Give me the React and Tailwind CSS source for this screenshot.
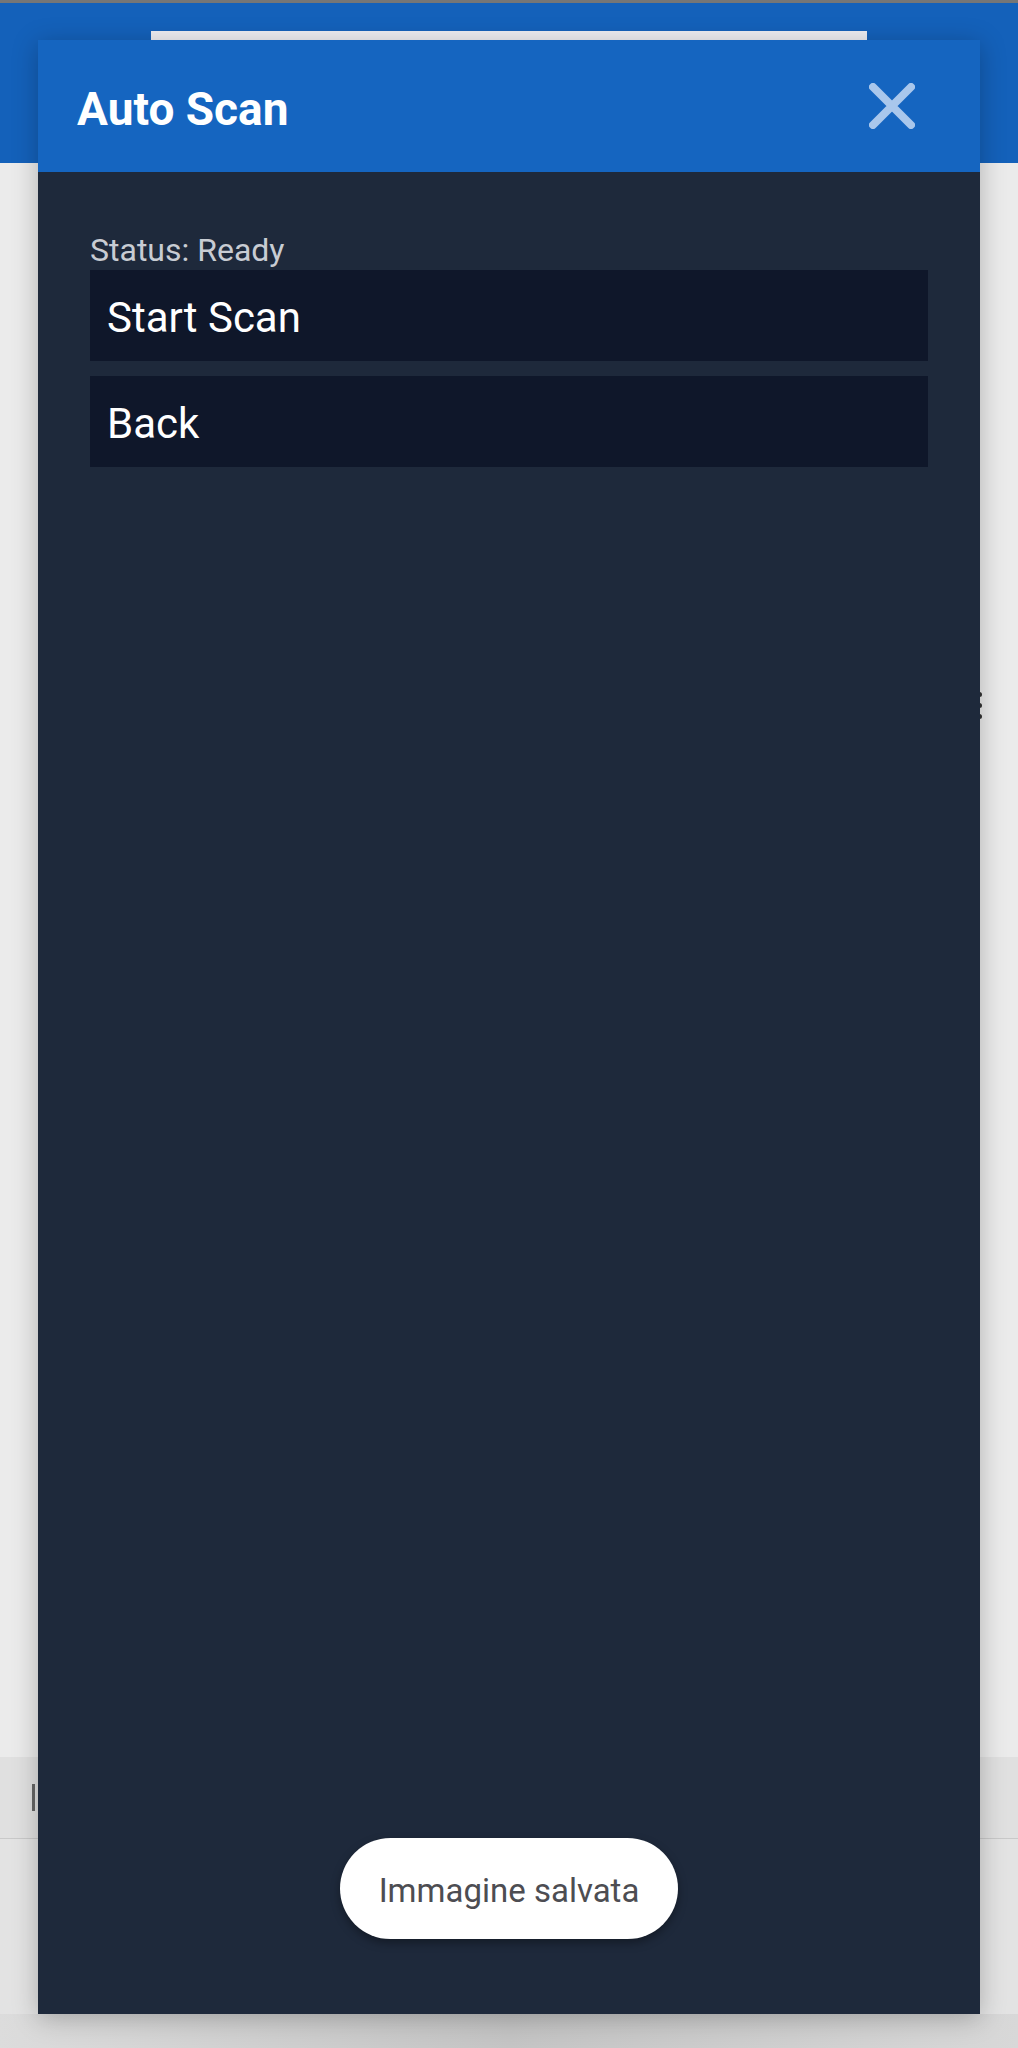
import React from 'react';

const CloseIcon = () => (
  <svg width="46" height="46" viewBox="0 0 46 46" fill="none">
    <path d="M4 4 L42 42 M42 4 L4 42" stroke="#a9c7ec" strokeWidth="8" strokeLinecap="round" />
  </svg>
);

const ActionButton = ({ label }) => (
  <button className="w-full h-[91px] bg-[#0f172a] text-white text-[42px] leading-none text-left pl-[17px] pt-[5px] flex items-center">
    {label}
  </button>
);

export default function App() {
  return (
    <div
      className="relative w-[1018px] h-[2048px] overflow-hidden bg-[#ebebeb] flex flex-col"
      style={{ fontFamily: 'Roboto, "Noto Sans", sans-serif' }}
    >
      {/* page behind the dialog */}
      <div className="h-[3px] bg-[#767676]" />
      <div className="h-[160px] bg-[#1461ba]" />
      <div className="relative h-[1594px] bg-[#ebebeb]">
        <div className="absolute left-[977px] top-[529px] flex flex-col gap-[6px]">
          <span className="w-[5px] h-[5px] rounded-full bg-[#333]" />
          <span className="w-[5px] h-[5px] rounded-full bg-[#333]" />
          <span className="w-[5px] h-[5px] rounded-full bg-[#333]" />
        </div>
      </div>
      <div className="h-[82px] bg-[#e0e0e0] border-b border-[#c9c9c9] flex items-center pl-[32px]">
        <span className="w-[3px] h-[27px] bg-[#666]" />
      </div>
      <div className="flex-1 bg-[#e3e3e3]" />
      <div className="h-[34px] bg-linear-to-r from-[#dcdcdc] via-[#c4c4c4] to-[#d8d8d8]" />

      {/* drag handle */}
      <div className="absolute left-[151px] top-[31px] w-[716px] h-[9px] bg-[#eeeef3]" />

      {/* dialog */}
      <div className="absolute left-[38px] top-[40px] w-[942px] h-[1974px] flex flex-col shadow-[0_4px_24px_rgba(0,0,0,0.25)]">
        <div className="h-[132px] bg-[#1565c0] flex items-center justify-between pl-[39px] pr-[65px]">
          <h1 className="text-white font-bold text-[46px] leading-none pt-[6px]">Auto Scan</h1>
          <CloseIcon />
        </div>
        <div className="relative flex-1 bg-[#1e293b] pt-[59px] px-[52px]">
          <div className="text-[#c8ccd3] text-[32px] leading-[38px] h-[39px]">Status: Ready</div>
          <div className="flex flex-col gap-[15px]">
            <ActionButton label="Start Scan" />
            <ActionButton label="Back" />
          </div>

          <div className="absolute inset-x-0 top-[1666px] flex justify-center">
            <div className="h-[101px] px-[39px] pt-[4px] rounded-full bg-white flex items-center shadow-[0_4px_10px_rgba(0,0,0,0.35)]">
              <span className="text-[#4d4d52] text-[33px] leading-none">Immagine salvata</span>
            </div>
          </div>
        </div>
      </div>
    </div>
  );
}
